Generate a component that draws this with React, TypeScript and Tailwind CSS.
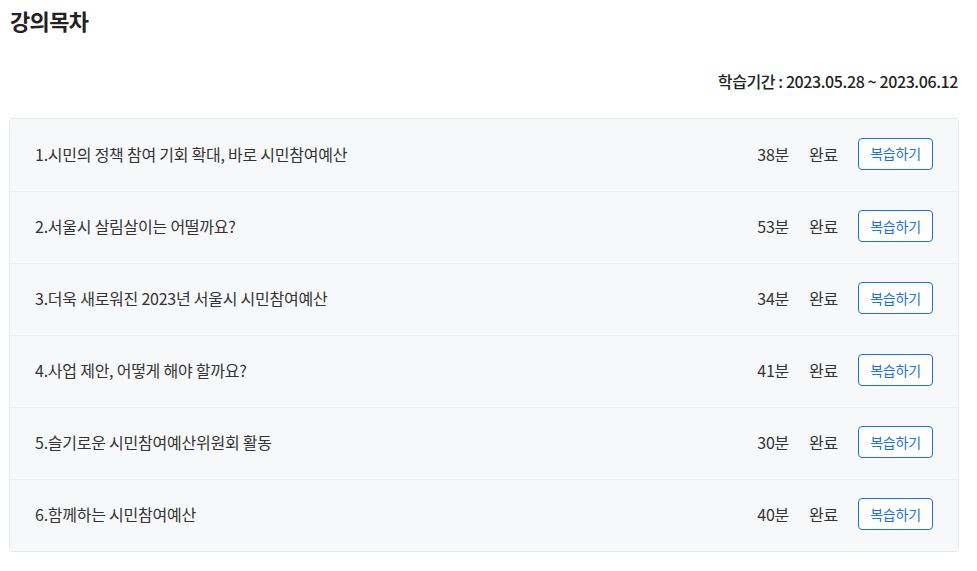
const lectures = [
  { title: "1.시민의 정책 참여 기회 확대, 바로 시민참여예산", min: 38 },
  { title: "2.서울시 살림살이는 어떨까요?", min: 53 },
  { title: "3.더욱 새로워진 2023년 서울시 시민참여예산", min: 34 },
  { title: "4.사업 제안, 어떻게 해야 할까요?", min: 41 },
  { title: "5.슬기로운 시민참여예산위원회 활동", min: 30 },
  { title: "6.함께하는 시민참여예산", min: 40 },
];

export default function App() {
  return (
    <div className="min-h-screen bg-white pl-[9px] pr-[18px] pt-[3px] text-[#333] [font-family:'Noto_Sans_CJK_KR','Noto_Sans',sans-serif] tracking-[-0.015em]">
      <h2 className="pl-[1px] text-[22px] font-bold leading-[34px] text-[#222] tracking-[-0.03em]">강의목차</h2>

      <div className="mt-[33px] flex justify-end pr-[1px] text-[16px] font-medium leading-[22px] text-[#222] tracking-[-0.025em]">
        학습기간 : 2023.05.28 ~ 2023.06.12
      </div>

      <div className="mt-[26px] overflow-hidden rounded-[4px] border border-[#e6e8eb] bg-[#f7f8fa]">
        {lectures.map((l, i) => (
          <div
            key={i}
            className={`flex h-[72px] items-center pb-[3px] pl-[25px] pr-[25px] ${i > 0 ? "border-t border-[#eceef1]" : ""}`}
          >
            <div className="flex-1 text-[16px] leading-[24px] text-[#333]">{l.title}</div>
            <div className="text-[16px] leading-[24px] text-[#333]">{l.min}분</div>
            <div className="ml-[20px] text-[16px] leading-[24px] text-[#333]">완료</div>
            <button className="ml-[20px] flex h-[32px] w-[75px] items-center justify-center rounded-[4px] border border-[#1a73d8] bg-white text-[14px] text-[#1a73d8]">
              복습하기
            </button>
          </div>
        ))}
      </div>
    </div>
  );
}
